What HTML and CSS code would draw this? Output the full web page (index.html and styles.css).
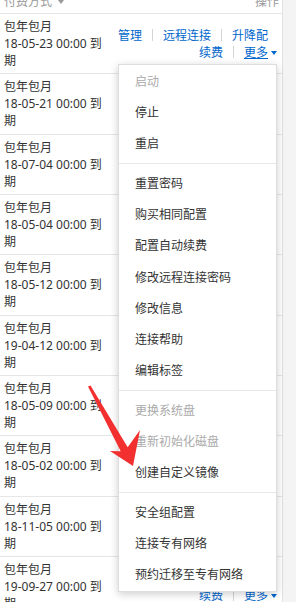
FILE: index.html
```html
<!DOCTYPE html>
<html lang="zh-CN">
<head>
  <meta charset="UTF-8" />
  <meta name="viewport" content="width=device-width, initial-scale=1.0"/>
  <title>实例列表</title>
  <link rel="stylesheet" href="styles.css">
</head>
<body>
  <div class="page">
    <div class="instance-table">
      <div class="table-head">
        <div class="col-pay">付费方式<span class="caret head-caret"></span></div>
        <div class="col-ops">操作</div>
      </div>

      <div class="row">
        <div class="col-pay"><div>包年包月</div><div>18-05-23 00:00 到期</div></div>
        <div class="col-ops">
          <div class="op-line"><a href="#">管理</a><span class="sep"></span><a href="#">远程连接</a><span class="sep"></span><a href="#">升降配</a></div>
          <div class="op-line"><a href="#">续费</a><span class="sep"></span><a href="#" class="more active">更多<span class="caret"></span></a></div>
        </div>
      </div>
      <div class="row">
        <div class="col-pay"><div>包年包月</div><div>18-05-21 00:00 到期</div></div>
        <div class="col-ops">
          <div class="op-line"><a href="#">管理</a><span class="sep"></span><a href="#">远程连接</a><span class="sep"></span><a href="#">升降配</a></div>
          <div class="op-line"><a href="#">续费</a><span class="sep"></span><a href="#" class="more">更多<span class="caret"></span></a></div>
        </div>
      </div>
      <div class="row">
        <div class="col-pay"><div>包年包月</div><div>18-07-04 00:00 到期</div></div>
        <div class="col-ops">
          <div class="op-line"><a href="#">管理</a><span class="sep"></span><a href="#">远程连接</a><span class="sep"></span><a href="#">升降配</a></div>
          <div class="op-line"><a href="#">续费</a><span class="sep"></span><a href="#" class="more">更多<span class="caret"></span></a></div>
        </div>
      </div>
      <div class="row">
        <div class="col-pay"><div>包年包月</div><div>18-05-04 00:00 到期</div></div>
        <div class="col-ops">
          <div class="op-line"><a href="#">管理</a><span class="sep"></span><a href="#">远程连接</a><span class="sep"></span><a href="#">升降配</a></div>
          <div class="op-line"><a href="#">续费</a><span class="sep"></span><a href="#" class="more">更多<span class="caret"></span></a></div>
        </div>
      </div>
      <div class="row">
        <div class="col-pay"><div>包年包月</div><div>18-05-12 00:00 到期</div></div>
        <div class="col-ops">
          <div class="op-line"><a href="#">管理</a><span class="sep"></span><a href="#">远程连接</a><span class="sep"></span><a href="#">升降配</a></div>
          <div class="op-line"><a href="#">续费</a><span class="sep"></span><a href="#" class="more">更多<span class="caret"></span></a></div>
        </div>
      </div>
      <div class="row">
        <div class="col-pay"><div>包年包月</div><div>19-04-12 00:00 到期</div></div>
        <div class="col-ops">
          <div class="op-line"><a href="#">管理</a><span class="sep"></span><a href="#">远程连接</a><span class="sep"></span><a href="#">升降配</a></div>
          <div class="op-line"><a href="#">续费</a><span class="sep"></span><a href="#" class="more">更多<span class="caret"></span></a></div>
        </div>
      </div>
      <div class="row">
        <div class="col-pay"><div>包年包月</div><div>18-05-09 00:00 到期</div></div>
        <div class="col-ops">
          <div class="op-line"><a href="#">管理</a><span class="sep"></span><a href="#">远程连接</a><span class="sep"></span><a href="#">升降配</a></div>
          <div class="op-line"><a href="#">续费</a><span class="sep"></span><a href="#" class="more">更多<span class="caret"></span></a></div>
        </div>
      </div>
      <div class="row">
        <div class="col-pay"><div>包年包月</div><div>18-05-02 00:00 到期</div></div>
        <div class="col-ops">
          <div class="op-line"><a href="#">管理</a><span class="sep"></span><a href="#">远程连接</a><span class="sep"></span><a href="#">升降配</a></div>
          <div class="op-line"><a href="#">续费</a><span class="sep"></span><a href="#" class="more">更多<span class="caret"></span></a></div>
        </div>
      </div>
      <div class="row">
        <div class="col-pay"><div>包年包月</div><div>18-11-05 00:00 到期</div></div>
        <div class="col-ops">
          <div class="op-line"><a href="#">管理</a><span class="sep"></span><a href="#">远程连接</a><span class="sep"></span><a href="#">升降配</a></div>
          <div class="op-line"><a href="#">续费</a><span class="sep"></span><a href="#" class="more">更多<span class="caret"></span></a></div>
        </div>
      </div>
      <div class="row">
        <div class="col-pay"><div>包年包月</div><div>19-09-27 00:00 到期</div></div>
        <div class="col-ops">
          <div class="op-line"><a href="#">管理</a><span class="sep"></span><a href="#">远程连接</a><span class="sep"></span><a href="#">升降配</a></div>
          <div class="op-line"><a href="#">续费</a><span class="sep"></span><a href="#" class="more">更多<span class="caret"></span></a></div>
        </div>
      </div>
    </div>

    <!-- dropdown of the first row's "更多" -->
    <ul class="dropdown-menu">
      <li class="disabled">启动</li>
      <li>停止</li>
      <li>重启</li>
      <li class="divider"></li>
      <li>重置密码</li>
      <li>购买相同配置</li>
      <li>配置自动续费</li>
      <li>修改远程连接密码</li>
      <li>修改信息</li>
      <li>连接帮助</li>
      <li>编辑标签</li>
      <li class="divider"></li>
      <li class="disabled">更换系统盘</li>
      <li class="disabled">重新初始化磁盘</li>
      <li>创建自定义镜像</li>
      <li class="divider"></li>
      <li>安全组配置</li>
      <li>连接专有网络</li>
      <li>预约迁移至专有网络</li>
    </ul>

    <!-- screenshot annotation arrow -->
    <svg class="arrow-mark" width="296" height="602" viewBox="0 0 296 602">
      <polygon points="88,386.5 120.7,451.3 110,451 133,466 140,430 127.7,447.3 90.5,385.5" fill="#f2302f"/>
    </svg>
  </div>
</body>
</html>
```

FILE: styles.css
```css
body {
  margin: 0;
  background: #f4f4f4;
  font-family: "Noto Sans", "Noto Sans CJK SC", sans-serif;
  font-size: 12px;
  color: #333;
}
.page {
  position: relative;
  width: 296px;
  height: 602px;
  overflow: hidden;
}
.instance-table {
  width: 282px;
  background: #fff;
  border-right: 1px solid #e2e2e2;
  margin-top: -11px;
}
.table-head {
  display: flex;
  align-items: center;
  height: 24px;
  line-height: 17px;
  color: #999;
  border-bottom: 1px solid #e6e6e6;
}
.table-head .col-ops {
  padding-right: 3px;
}
.row {
  display: flex;
  align-items: center;
  height: 60.33px;
  box-sizing: border-box;
  line-height: 17px;
  border-bottom: 1px solid #e6e6e6;
}
.col-pay {
  flex: none;
  width: 104px;
  padding-left: 4px;
}
.col-ops {
  flex: 1;
  text-align: right;
  padding-right: 14px;
}
a {
  color: #06c;
  text-decoration: none;
}
a.more.active {
  text-decoration: underline;
}
.sep {
  display: inline-block;
  width: 1px;
  height: 12px;
  margin: 0 10px;
  background: #d5d5d5;
  vertical-align: -1px;
}
.caret {
  display: inline-block;
  width: 0;
  height: 0;
  border-left: 3px solid transparent;
  border-right: 3px solid transparent;
  border-top: 4px solid #06c;
  margin-left: 3px;
  margin-right: -9px;
  vertical-align: middle;
}
.head-caret {
  border-top-color: #999;
  margin-left: 6px;
  margin-right: 0;
}
.dropdown-menu {
  position: absolute;
  left: 118px;
  top: 64px;
  width: 157px;
  margin: 0;
  padding: 1px 0 0;
  list-style: none;
  background: #fff;
  border: 1px solid #ddd;
  box-shadow: 0 2px 8px rgba(0, 0, 0, 0.2);
}
.dropdown-menu li {
  height: 31.1px;
  line-height: 31px;
  padding-left: 16px;
  color: #333;
}
.dropdown-menu li.disabled {
  color: #aaa;
}
.dropdown-menu li.divider {
  height: 1px;
  margin: 4px 0;
  padding: 0;
  background: #e8e8e8;
}
.arrow-mark {
  position: absolute;
  left: 0;
  top: 0;
  pointer-events: none;
}
```
